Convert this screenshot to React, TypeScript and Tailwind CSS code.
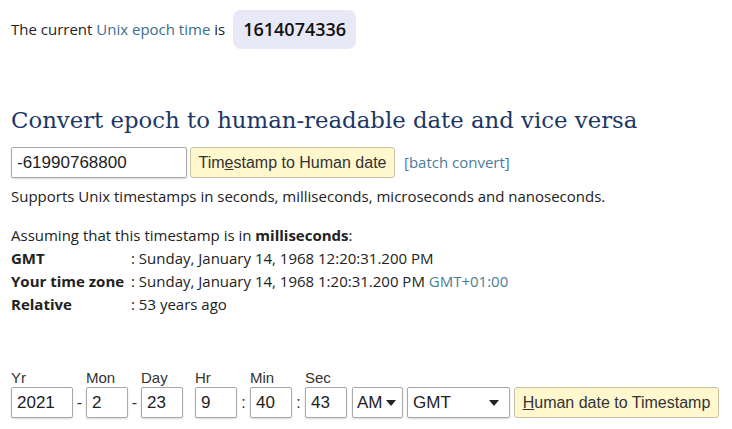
import React from "react";

const body = { fontFamily: '"Open Sans", "Noto Sans", sans-serif' };
const arial = { fontFamily: '"Liberation Sans", Arial, sans-serif' };

function Field({ label, value, w }: { label: string; value: string; w: string }) {
  return (
    <div className="flex flex-col">
      <span className="text-[15px] leading-[19px] text-[#333]" style={arial}>
        {label}
      </span>
      <div
        className={`${w} h-[31px] border border-[#a9a9a9] rounded-[2px] bg-white pl-[5px] flex items-center text-[17px] text-[#222] shadow-[0_1px_2px_rgba(0,0,0,0.15)]`}
        style={arial}
      >
        {value}
      </div>
    </div>
  );
}

function Sep({ c }: { c: string }) {
  return (
    <span className="self-end h-[31px] flex items-center w-[13px] justify-center text-[16px] text-[#333]" style={arial}>
      {c}
    </span>
  );
}

function Caret() {
  return (
    <svg width="10" height="6" viewBox="0 0 10 6">
      <path d="M0 0h10L5 6z" fill="#222" />
    </svg>
  );
}

export default function App() {
  return (
    <div className="w-[732px] h-[429px] bg-white text-[#222] overflow-hidden pl-[11px]" style={body}>
      {/* current time */}
      <div className="flex items-center h-[59px] text-[15px]">
        <span>
          The current <span className="text-[#3b6e8f]">Unix epoch time</span> is
        </span>
        <span className="ml-[8px] bg-[#e8e8f6] rounded-[8px] h-[39px] w-[123px] flex items-center justify-center text-[18px] font-semibold text-[#111]">
          1614074336
        </span>
      </div>

      {/* heading */}
      <h1
        className="mt-[44px] text-[22.8px] leading-[34px] text-[#1c3764]"
        style={{ fontFamily: '"DejaVu Serif", "Liberation Serif", serif' }}
      >
        Convert epoch to human-readable date and vice versa
      </h1>

      <div className="flex items-center mt-[10px] h-[31px]">
        <div
          className="w-[176px] h-[31px] border border-[#a9a9a9] rounded-[2px] pl-[5px] flex items-center text-[17px] shadow-[0_1px_2px_rgba(0,0,0,0.15)]"
          style={arial}
        >
          -61990768800
        </div>
        <div
          className="ml-[3px] w-[205px] h-[31px] border border-[#c8c0a0] rounded-[3px] bg-[#fff8cf] flex items-center justify-center text-[16px] text-[#333]"
          style={arial}
        >
          Tim<span className="underline">e</span>stamp to Human date
        </div>
        <span className="ml-[9px] text-[15px] text-[#4a7c99]">[batch convert]</span>
      </div>

      <p className="mt-[8px] text-[15px] leading-[20px]">
        Supports Unix timestamps in seconds, milliseconds, microseconds and nanoseconds.
      </p>

      <div className="mt-[18px] text-[15px] leading-[23px]">
        <div>
          Assuming that this timestamp is in <b>milliseconds</b>:
        </div>
        <div className="flex">
          <b className="w-[120px]">GMT</b>
          <span>: Sunday, January 14, 1968 12:20:31.200 PM</span>
        </div>
        <div className="flex">
          <b className="w-[120px]">Your time zone</b>
          <span>
            : Sunday, January 14, 1968 1:20:31.200 PM <span className="text-[#4a7c99]">GMT+01:00</span>
          </span>
        </div>
        <div className="flex">
          <b className="w-[120px]">Relative</b>
          <span>: 53 years ago</span>
        </div>
      </div>

      {/* human date to timestamp */}
      <div className="flex items-end mt-[52px]">
        <Field label="Yr" value="2021" w="w-[62px]" />
        <Sep c="-" />
        <Field label="Mon" value="2" w="w-[42px]" />
        <Sep c="-" />
        <Field label="Day" value="23" w="w-[42px]" />
        <div className="w-[12px]" />
        <Field label="Hr" value="9" w="w-[42px]" />
        <Sep c=":" />
        <Field label="Min" value="40" w="w-[42px]" />
        <Sep c=":" />
        <Field label="Sec" value="43" w="w-[42px]" />
        <div
          className="ml-[5px] w-[51px] h-[31px] border border-[#a9a9a9] rounded-[2px] flex items-center pl-[4px] gap-[3px] text-[17px] shadow-[0_1px_2px_rgba(0,0,0,0.15)]"
          style={arial}
        >
          AM
          <Caret />
        </div>
        <div
          className="ml-[4px] w-[103px] h-[31px] border border-[#a9a9a9] rounded-[2px] flex items-center justify-between pl-[5px] pr-[10px] text-[17px] shadow-[0_1px_2px_rgba(0,0,0,0.15)]"
          style={arial}
        >
          GMT
          <Caret />
        </div>
        <div
          className="ml-[4px] w-[205px] h-[31px] border border-[#c8c0a0] rounded-[3px] bg-[#fff8cf] flex items-center justify-center text-[16px] text-[#333]"
          style={arial}
        >
          <span className="underline">H</span>uman date to Timestamp
        </div>
      </div>
    </div>
  );
}
